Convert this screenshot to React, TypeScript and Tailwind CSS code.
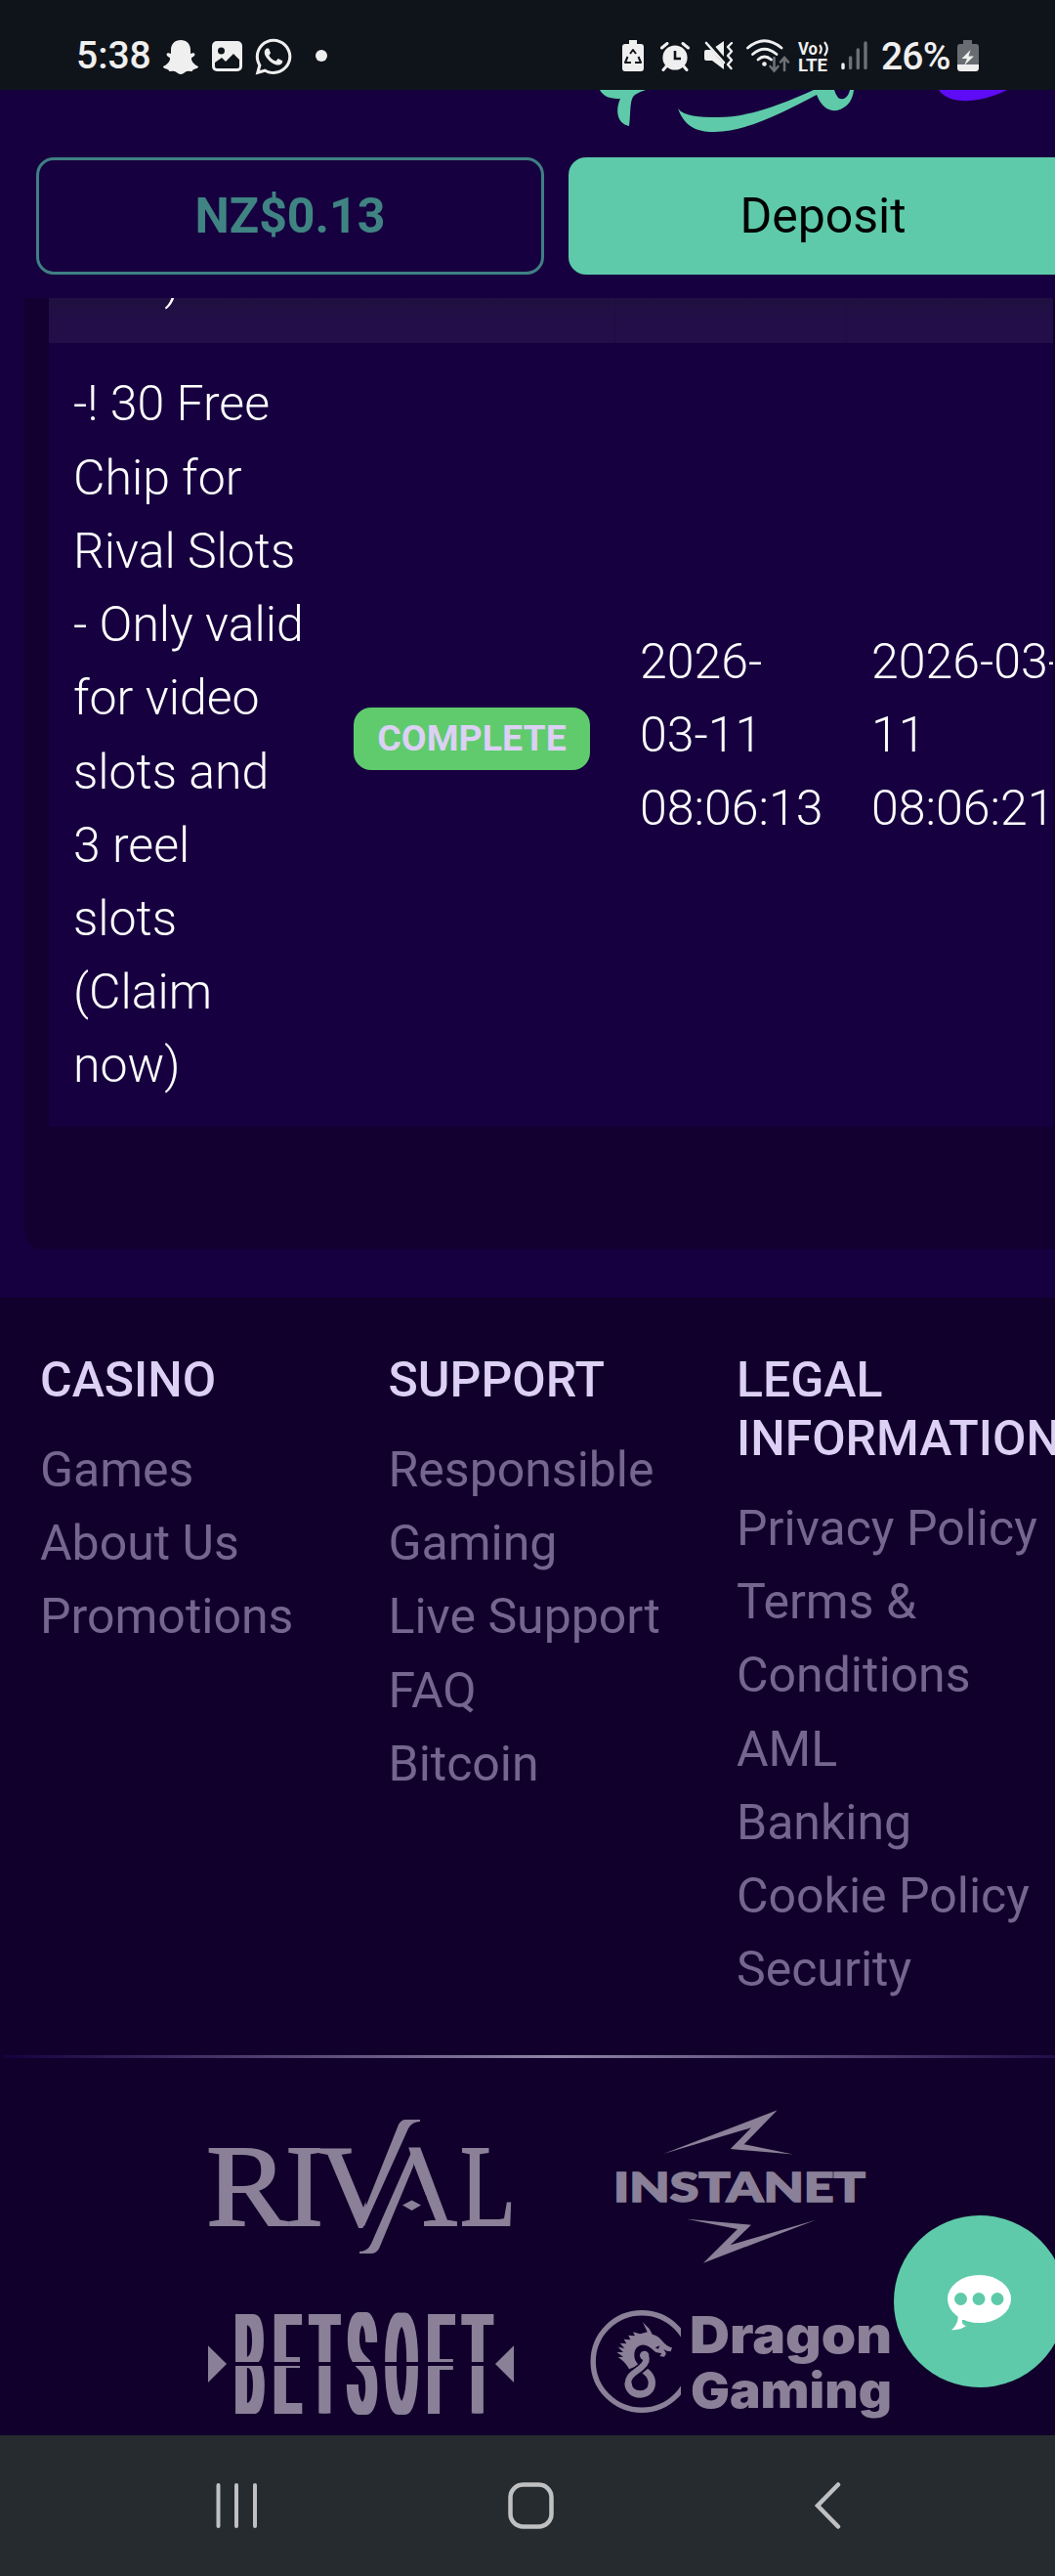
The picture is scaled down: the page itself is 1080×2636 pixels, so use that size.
import React from 'react';
import { FaWhatsapp } from 'react-icons/fa6';

interface FooterColumn {
  title: string[];
  links: string[];
}

const CLAIM_LINES = ['-! 30 Free', 'Chip for', 'Rival Slots', '- Only valid', 'for video', 'slots and', '3 reel', 'slots', '(Claim', 'now)'];

const FOOTER_COLUMNS: FooterColumn[] = [
  { title: ['CASINO'], links: ['Games', 'About Us', 'Promotions'] },
  { title: ['SUPPORT'], links: ['Responsible', 'Gaming', 'Live Support', 'FAQ', 'Bitcoin'] },
  {
    title: ['LEGAL', 'INFORMATION'],
    links: ['Privacy Policy', 'Terms &', 'Conditions', 'AML', 'Banking', 'Cookie Policy', 'Security'],
  },
];

function StatusBar(): React.ReactNode {
  return (
    <div className="h-[92px] bg-[#0f141a] text-[#efefef] pt-[36px] flex items-start whitespace-nowrap">
      <span className="w-[89px] ml-[78px] text-[39px] leading-[42px] font-medium">5:38</span>
      <svg className="w-[36px] h-[35px] mt-[5px]" viewBox="0 0 36 35" fill="currentColor">
        <path d="M18 0 C24 0 28 4 28 10 V14 C30 13 32 13 32.500 14.500 C33 16 29.500 17.500 29 18.500 C28.500 21 32 25.500 36 27 C36 29.500 31.500 29.500 30.500 30.500 C30 31.500 30 32 28 32 C26 31.500 24.500 31.500 23 32.500 C21 34 20 35 18 35 C16 35 15 34 13 32.500 C11.500 31.500 10 31.500 8 32 C6 32 6 31.500 5.500 30.500 C4.500 29.500 0 29.500 0 27 C4 25.500 7.500 21 7 18.500 C6.500 17.500 3 16 3.500 14.500 C4 13 6 13 8 14 V10 C8 4 12 0 18 0 Z" />
      </svg>
      <svg className="w-[31px] h-[31px] ml-[14px] mt-[6px]" viewBox="0 0 31 31">
        <rect width="31" height="31" rx="5" fill="currentColor" />
        <circle cx="9.5" cy="10" r="3.5" fill="#0f141a" />
        <path d="M3 22 L10 17 L14 21 L22 13 L28 19 V26 Q28 28 26 28 H5 Q3 28 3 26 Z" fill="#0f141a" />
      </svg>
      <FaWhatsapp className="w-[42px] h-[42px] ml-[11px] mt-px" />
      <span className="w-[12px] h-[12px] rounded-full bg-[#efefef] ml-[22px] mt-[15px]" />

      {/* battery protection */}
      <svg className="w-[22px] h-[32px] ml-[302px] mt-[5px]" viewBox="0 0 22 32">
        <path d="M7 0h8v4h4q3 0 3 3v22q0 3-3 3H3q-3 0-3-3V7q0-3 3-3h4z" fill="currentColor" />
        <path d="M8 14 L11 10 L14 14 M16.5 17 L19 23 H13 M9 23 H3 L5.5 17" fill="none" stroke="#0f141a" strokeWidth="2" strokeLinejoin="round" />
      </svg>
      <svg className="w-[30px] h-[30px] ml-[17px] mt-[7px]" viewBox="0 0 30 30">
        <circle cx="15" cy="16" r="12.6" fill="currentColor" />
        <path d="M1.5 6 L7 1.5 M28.5 6 L23 1.5 M6 25 L3 28.5 M24 25 L27 28.5" stroke="currentColor" strokeWidth="3" strokeLinecap="round" />
        <path d="M15 9 V17 H21" fill="none" stroke="#0f141a" strokeWidth="2.6" />
      </svg>
      <svg className="w-[30px] h-[30px] ml-[15px] mt-[6px]" viewBox="0 0 30 30">
        <path d="M0 11 Q0 9 2 9 H7 L20 0 V29 L8 20 H2 Q0 20 0 18 Z" fill="currentColor" />
        <path d="M3 0 L21 21" stroke="#0f141a" strokeWidth="5" />
        <path d="M2 2 L20 22" stroke="currentColor" strokeWidth="2.6" strokeLinecap="round" />
        <path d="M28 2 L24 6 L28 10.5 L24 15 L28 19.500 L24 24 L27.500 28" fill="none" stroke="currentColor" strokeWidth="2.4" strokeLinejoin="round" strokeLinecap="round" />
      </svg>
      <svg className="w-[45px] h-[35px] ml-[13px] mt-[4px]" viewBox="0 0 45 35">
        <g fill="none" stroke="currentColor" strokeWidth="2.800" strokeLinecap="round">
          <path d="M1.500 9 Q18.500 -5.500 36 9" />
          <path d="M6.500 15.500 Q18.500 5 31 15.500" />
          <path d="M12 21 Q18.500 15 25.500 21" />
        </g>
        <circle cx="18.500" cy="25.500" r="2.300" fill="currentColor" />
        <path d="M28.500 19 V32 M24.500 28 L28.500 32.500 L32.500 28 M39 32 V19.500 M35 23.500 L39 19 L43 23.500" fill="none" stroke="#6d7074" strokeWidth="2.600" strokeLinecap="round" />
      </svg>
      <svg className="w-[32px] h-[37px] ml-[8px] mt-[4px] overflow-visible" viewBox="0 0 32 37" fill="currentColor">
        <text x="0" y="15.500" fontSize="17.500" fontWeight="700" textLength="20" lengthAdjust="spacingAndGlyphs">Vo</text>
        <path d="M22 6 Q25.500 10 22 15 M27 3 Q32.500 9.500 27 17" fill="none" stroke="currentColor" strokeWidth="2.200" />
        <text x="0" y="32.500" fontSize="18.500" fontWeight="700" textLength="30" lengthAdjust="spacingAndGlyphs">LTE</text>
      </svg>
      <svg className="w-[28px] h-[30px] ml-[12px] mt-[6px]" viewBox="0 0 28 30" strokeWidth="3.400" strokeLinecap="round">
        <path d="M2 24 V27.500" stroke="#efefef" />
        <path d="M9.600 17 V27.500 M17.300 9 V27.500 M25 2 V27.500" stroke="#6d7074" />
      </svg>
      <span className="w-[79px] ml-[13px] text-[39px] leading-[44px] font-medium tracking-[-0.8px]">26%</span>
      <svg className="w-[22px] h-[32px] -ml-[1px] mt-[5px]" viewBox="0 0 22 32">
        <path d="M6 0h9v4h4q3 0 3 3v18H0V7q0-3 3-3h3z" fill="#696c70" />
        <path d="M0 25h22v3.500q0 3.500-3.500 3.500h-15Q0 32 0 28.500z" fill="currentColor" />
        <path d="M13.500 10 L4.500 19 H10 L7 26 L17 16.500 H11.500 Z" fill="currentColor" />
      </svg>
    </div>
  );
}

function SiteHeader(): React.ReactNode {
  return (
    <header className="h-[213px] bg-[#170040] shrink-0">
      <svg className="w-[1080px] h-[69px] block" viewBox="0 92 1080 69">
        <g fill="#5ecaa9">
          <path d="M614 92 C618 99 624 101 635 101 C630 112 631 126 644 129 C646 117 644 101 650 97 Q654 94 661 92 Z" />
          <path d="M694 111 C700 127 710 135 731 135 C768 134 805 113 836 97 C841 110 849 114 857 113 C868 110 873 102 874 92 L870 92 C868 101 862 103 858 100 Q855 96 854 92 L833 92 C800 107 766 120 735 120 C715 120 700 119 694 111 Z" />
        </g>
        <path d="M961 92 C972 108 1003 106 1031 92 Z" fill="#5e0cf5" />
      </svg>
      <div className="flex gap-[25px] pl-[37px]">
        <button className="w-[520px] h-[120px] shrink-0 rounded-[18px] border-[3px] border-[#3f8083] text-[#3f8482] text-[50px] font-bold">
          NZ$0.13
        </button>
        <button className="w-[521px] h-[120px] shrink-0 rounded-[18px] bg-[#5ecaa9] text-black text-[50px]">Deposit</button>
      </div>
    </header>
  );
}

function ClaimsTable(): React.ReactNode {
  return (
    <div className="ml-[25px] h-[973px] bg-[#130030] rounded-bl-[18px] pl-[25px] text-white font-light text-[50px] leading-[75.2px]">
      <div className="w-[1028px]">
        <div className="h-[46px] bg-[linear-gradient(#201040,#230e49_24px,#230e49)] overflow-hidden flex items-end">
          <div className="w-[580px] pl-[25px] pb-[25px] border-r border-[#200c44]">now)</div>
          <div className="w-[237px] h-full border-r border-[#200c44]" />
        </div>
        <div className="bg-[#170040] h-[802px] pt-px flex items-center">
          <div className="w-[287px] pl-[25px] whitespace-nowrap">
            {CLAIM_LINES.map(line => (
              <div key={line}>{line}</div>
            ))}
          </div>
          <div className="w-[293px] pl-[25px] pt-[7px]">
            <span className="flex items-center justify-center w-[242px] h-[64px] rounded-[18px] bg-[#5fcb6d] text-[#dcd0f5] text-[37.500px] leading-none font-bold">
              COMPLETE
            </span>
          </div>
          <div className="w-[237px] pl-[25px]">
            <div>2026-</div>
            <div>03-11</div>
            <div>08:06:13</div>
          </div>
          <div className="w-[211px] pl-[25px] whitespace-nowrap overflow-hidden">
            <div>2026-03-</div>
            <div>11</div>
            <div>08:06:21</div>
          </div>
        </div>
      </div>
    </div>
  );
}

function RivalLogo(): React.ReactNode {
  return (
    <svg className="w-[400px] h-[175px]" viewBox="200 2150 400 175" fill="#8a8098">
      <defs>
        <clipPath id="rival-v">
          <path d="M320 2190 H370 L375 2262 L380 2285 H320 Z" />
        </clipPath>
        <clipPath id="rival-a">
          <path d="M416 2190 H440 L475 2268 V2285 H434 V2272 H446 L423 2213 Z" />
        </clipPath>
      </defs>
      <g fontFamily="Liberation Serif, serif" fontSize="119" stroke="#8a8098" strokeWidth="1.800">
        <text x="211" y="2276.500" textLength="84" lengthAdjust="spacingAndGlyphs">R</text>
        <text x="292" y="2276.500" textLength="39" lengthAdjust="spacingAndGlyphs">I</text>
        <text x="326" y="2276.500" clipPath="url(#rival-v)">V</text>
        <text x="382" y="2276.500" clipPath="url(#rival-a)">A</text>
        <text x="471" y="2276.500" textLength="57" lengthAdjust="spacingAndGlyphs">L</text>
      </g>
      {/* the two long diagonals that cross the wordmark */}
      <path d="M369 2277 L374 2259 L408 2174 Q411 2169 415 2169 H430 V2171 Q422 2171 418 2178 L373 2278 Z" />
      <path d="M423 2198 L427 2198 L423 2217 L388 2301 Q385 2306 380 2306 H368 V2304 Q376 2304 380 2296 Z" />
      <path d="M412 2256.500 L421.500 2251.500 L431 2256.500 L421.500 2262 Z" />
    </svg>
  );
}

function InstanetLogo(): React.ReactNode {
  return (
    <svg className="w-[320px] h-[175px]" viewBox="600 2150 320 175" fill="#8a8098">
      <path d="M679 2204 L795.700 2159.300 L761.700 2194.300 L812 2204.500 L747.700 2199 L769 2177.300 Z" />
      <text x="628" y="2252.700" fontFamily="Lato, sans-serif" fontWeight="900" fontSize="42.500" stroke="#8a8098" strokeWidth="1.600" textLength="258" lengthAdjust="spacingAndGlyphs">
        INSTANET
      </text>
      <path d="M703 2270.700 L769 2276.700 L747.700 2297.300 L835 2271.700 L720 2315.700 L755 2281 Z" />
    </svg>
  );
}

function BetsoftLogo(): React.ReactNode {
  return (
    <div className="relative w-[400px] h-[137px] pl-[13px] flex">
      <svg className="w-[19px] h-[137px] shrink-0" viewBox="0 0 19 137">
        <path d="M0 45.300 L19 64 L0 83 Z" fill="#8a8098" />
      </svg>
      <div className="w-[275px] pl-[9px] shrink-0">
        {/* shadows widen the stems that the squeeze makes thin */}
        <span className="block w-[820px] origin-left scale-x-[.32] whitespace-nowrap text-[#8a8098] text-[143.500px] leading-[132px] tracking-[35px] [text-shadow:-12px_0_#8a8098,-6px_0_#8a8098,6px_0_#8a8098,12px_0_#8a8098]">
          BETSOFT
        </span>
      </div>
      <svg className="w-[19px] h-[137px] shrink-0" viewBox="0 0 19 137">
        <path d="M19 45.300 L0 64 L19 83 Z" fill="#8a8098" />
      </svg>
      <div className="absolute left-[38px] top-[62px] w-[268px] h-[4px] bg-[#11002b]" />
    </div>
  );
}

function DragonLogo(): React.ReactNode {
  return (
    <svg className="w-[320px] h-[137px]" viewBox="600 2355 320 137" fill="#8a8098">
      <defs>
        <clipPath id="dragon-ring">
          <rect x="600" y="2355" width="97" height="137" />
        </clipPath>
      </defs>
      <circle cx="657" cy="2416.500" r="49.800" fill="none" stroke="#8a8098" strokeWidth="5.400" clipPath="url(#dragon-ring)" />
      <g transform="translate(600 2355) scale(.3333)">
        <path d="M174 64 L194 84 L204 102 C218 104 228 114 240 128 C248 136 256 140 264 142 L260 154 L248 152 L238 147 L246 160 L240 170 L226 168 L232 160 L214 156 C206 150 196 140 186 136 C166 128 148 142 148 164 C148 180 156 190 164 196 L132 208 C122 190 112 180 98 172 L114 170 L94 156 L114 156 L98 140 L118 144 L104 128 L124 130 L116 116 L136 118 L130 104 L150 106 L144 94 L166 100 L188 94 Z" />
        <path d="M212 142 L226 136 L222 146 Z" fill="#11002b" />
        <path d="M160 208 C185 214 202 228 202 250 C202 272 186 285 166 285 C146 285 129 272 129 250 C129 226 152 218 172 200 C186 188 188 176 178 165" fill="none" stroke="#11002b" strokeWidth="28" />
        <path d="M164 204 C186 214 202 228 202 250 C202 272 186 285 166 285 C146 285 129 272 129 250" fill="none" stroke="#8a8098" strokeWidth="22" />
        <path d="M145 228 L190 190" stroke="#11002b" strokeWidth="24" />
        <path d="M129 252 C129 226 152 218 170 202 C184 190 188 178 182 168" fill="none" stroke="#8a8098" strokeWidth="19" />
        <circle cx="179" cy="166" r="14" />
      </g>
      <g fontFamily="Inter, sans-serif" fontWeight="900" fontSize="52">
        <text x="706" y="2408" textLength="207" lengthAdjust="spacingAndGlyphs">Dragon</text>
        <text x="707" y="2463.500" fontSize="50" textLength="206" lengthAdjust="spacingAndGlyphs">Gaming</text>
      </g>
    </svg>
  );
}

function Footer(): React.ReactNode {
  return (
    <footer className="h-[1164px] bg-[#11002b] mt-[50px] overflow-hidden">
      <div className="h-[775px] pt-[54px] pl-[41px] flex text-[50px]">
        {FOOTER_COLUMNS.map(col => (
          <div key={col.title[0]} className="w-[356.500px] shrink-0">
            <h3 className="text-[#dcd0f5] font-medium leading-[60px] mb-[25px]">
              {col.title.map(line => (
                <div key={line}>{line}</div>
              ))}
            </h3>
            <ul className="text-[#75668f] leading-[75.200px] whitespace-nowrap">
              {col.links.map(link => (
                <li key={link}>{link}</li>
              ))}
            </ul>
          </div>
        ))}
      </div>
      <div className="h-[3px] w-[1130px] ml-[3px] bg-[linear-gradient(90deg,#170040,#8f84a6,#170040)]" />
      <div className="pl-[200px] mt-[44px] flex flex-wrap gap-y-[30px]">
        <RivalLogo />
        <InstanetLogo />
        <BetsoftLogo />
        <DragonLogo />
      </div>
    </footer>
  );
}

function ChatButton(): React.ReactNode {
  return (
    <button className="absolute left-[915px] top-[2267px] w-[176px] h-[176px] rounded-full bg-[#5ecaa9]">
      <svg className="w-[176px] h-[176px]" viewBox="915 2267 176 176">
        <ellipse cx="1002.500" cy="2352.500" rx="32.500" ry="24.500" fill="#fff" />
        <path d="M979 2366 Q984 2375 974 2384.500 Q984 2384 989 2380 Q984 2379 985 2374 H995 V2366 Z" fill="#fff" />
        <g fill="#5ecaa9">
          <circle cx="983.500" cy="2352.500" r="6.500" />
          <circle cx="1002" cy="2352.500" r="6.500" />
          <circle cx="1021" cy="2352.500" r="6.500" />
        </g>
      </svg>
    </button>
  );
}

function NavBar(): React.ReactNode {
  return (
    <nav className="h-[144px] bg-[#262b2f] flex items-start pt-[48px] pl-[221px]">
      <svg className="w-[43px] h-[48px]" viewBox="0 0 43 48" stroke="#bfc0c2" strokeWidth="4" strokeLinecap="round">
        <path d="M2.500 3 V45 M21 3 V45 M40 3 V45" />
      </svg>
      <svg className="w-[47px] h-[48px] ml-[256px]" viewBox="0 0 47 48">
        <rect x="2.500" y="2.500" width="42" height="43" rx="13" fill="none" stroke="#bfc0c2" strokeWidth="4.500" />
      </svg>
      <svg className="w-[28px] h-[48px] ml-[266px]" viewBox="0 0 28 48">
        <path d="M25 2.500 L4 24 L25 45.500" fill="none" stroke="#bfc0c2" strokeWidth="4.500" strokeLinecap="round" />
      </svg>
    </nav>
  );
}

export default function App(): React.ReactNode {
  return (
    <div className="relative w-[1080px] h-[2636px] overflow-hidden bg-[#170040] font-[Roboto,sans-serif]">
      <StatusBar />
      <SiteHeader />
      <ClaimsTable />
      <Footer />
      <NavBar />
      <ChatButton />
    </div>
  );
}
